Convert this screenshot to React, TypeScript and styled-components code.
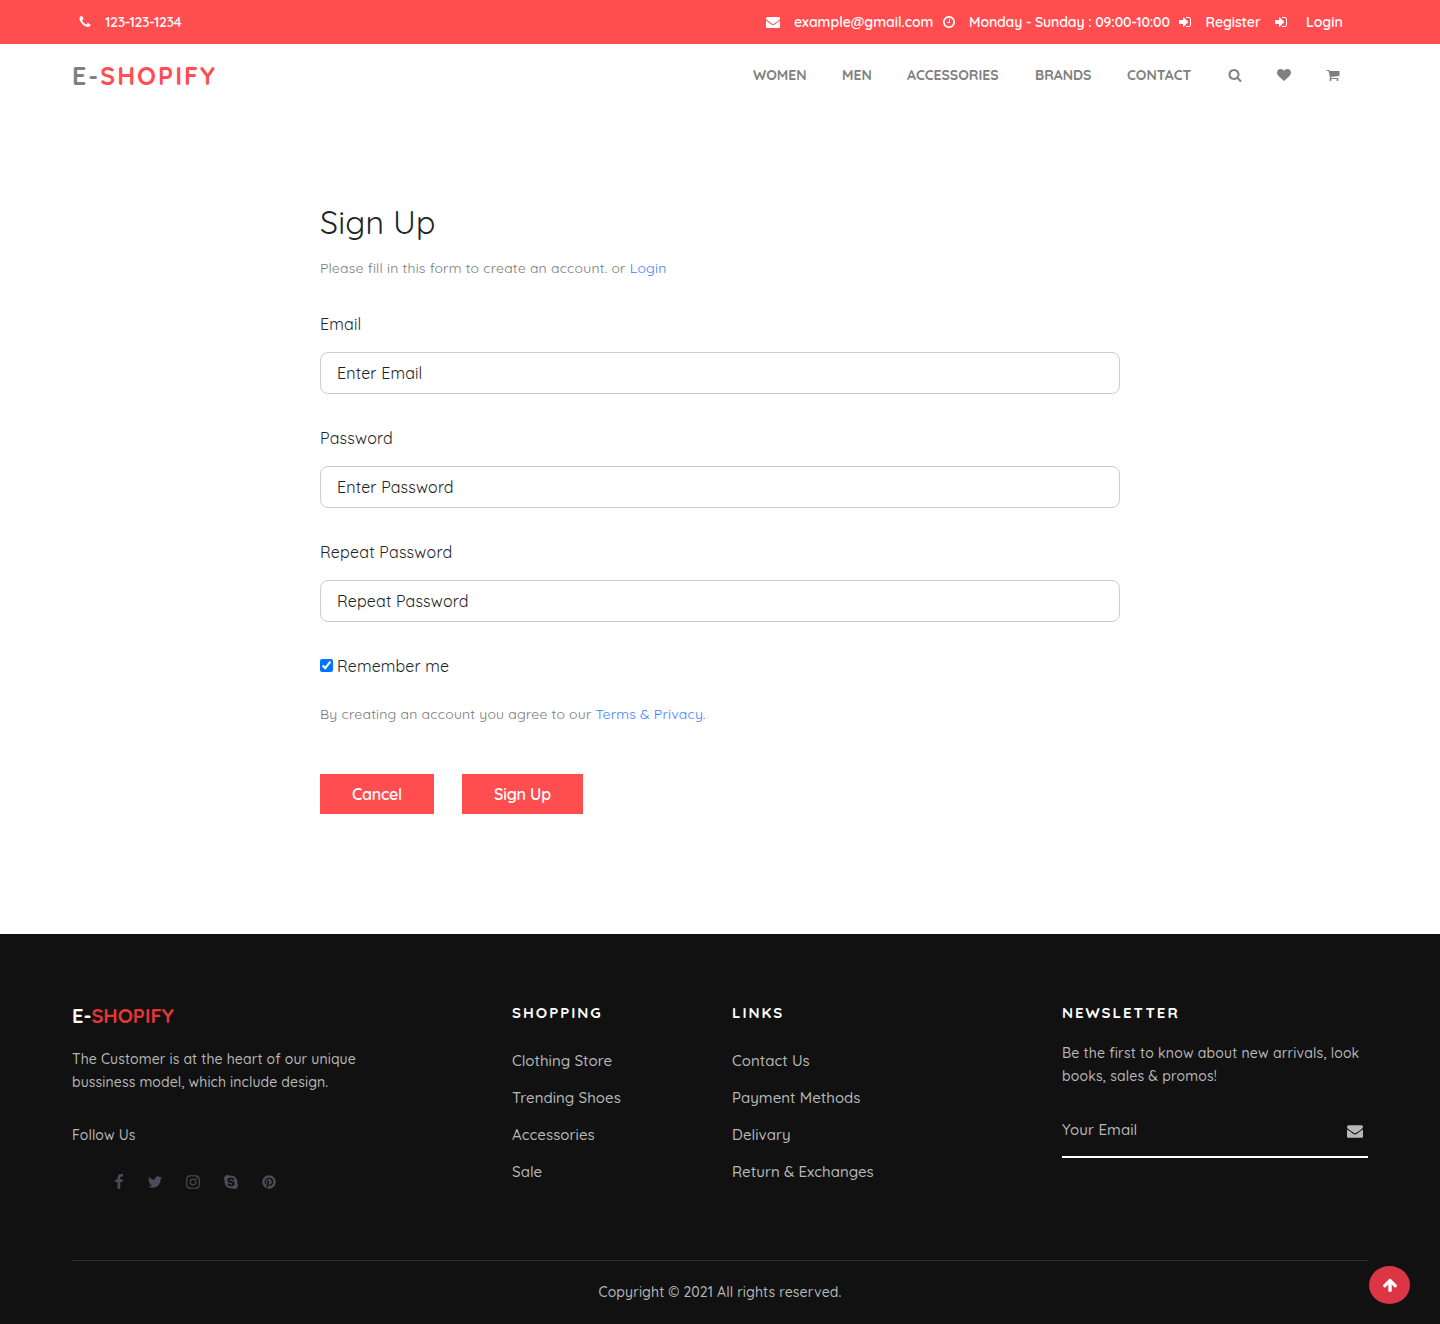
import React from "react";
import styled, { createGlobalStyle } from "styled-components";
import { FaPinterest, FaSkype } from "react-icons/fa";

const GlobalStyle = createGlobalStyle`
  *, *::before, *::after { box-sizing: border-box; }
  body {
    margin: 0;
    background: #fff;
    color: #212529;
    font-family: Quicksand, Lato, sans-serif;
    font-size: 16px;
    font-variant-ligatures: none;
  }
  h1, h2, h3, p, ul { margin: 0; padding: 0; font-weight: inherit; }
  a { color: inherit; text-decoration: none; }
  ul { list-style: none; }
`;

const paths = {
  phone:
    "M1600 1240q0 27-10 70.5t-21 68.5q-21 50-122 106-94 51-186 51-27 0-53-3.5t-57.5-12.5-47-14.5-55.5-20.5-49-18q-98-35-175-83-127-79-264-216t-216-264q-48-77-83-175-3-9-18-49t-20.5-55.5-14.5-47-12.5-57.5-3.5-53q0-92 51-186 56-101 106-122 25-11 68.5-21t70.5-10q14 0 21 3 18 6 53 76 11 19 30 54t35 63.5 31 53.5q3 4 17.5 25t21.5 35.5 7 28.5q0 20-28.5 50t-62 55-62 53-28.5 46q0 9 5 22.5t8.5 20.5 14 24 11.5 19q76 137 174 235t235 174q2 1 19 11.5t24 14 20.5 8.5 22.5 5q18 0 46-28.5t53-62 55-62 50-28.5q14 0 28.5 7t35.5 21.5 25 17.5q25 15 53.5 31t63.5 35 54 30q70 35 76 53 3 7 3 21z",
  envelope:
    "M1792 710v794q0 66-47 113t-113 47h-1472q-66 0-113-47t-47-113v-794q44 49 101 87 362 246 497 345 57 42 92.5 65.5t94.5 48 110 24.5h2q51 0 110-24.5t94.5-48 92.5-65.5q170-123 498-345 57-39 100-87zm0-294q0 79-49 151t-122 123q-376 261-468 325-10 7-42.5 30.5t-54 38-52 32.5-57.5 27-50 9h-2q-23 0-50-9t-57.5-27-52-32.5-54-38-42.5-30.5q-91-64-262-182.5t-205-142.5q-62-42-117-115.5t-55-136.5q0-78 41.5-130t118.5-52h1472q65 0 112.5 47t47.5 113z",
  clock:
    "M1024 544v448q0 14-9 23t-23 9h-320q-14 0-23-9t-9-23v-64q0-14 9-23t23-9h224v-352q0-14 9-23t23-9h64q14 0 23 9t9 23zm416 352q0-148-73-273t-198-198-273-73-273 73-198 198-73 273 73 273 198 198 273 73 273-73 198-198 73-273zm224 0q0 209-103 385.5t-279.5 279.5-385.5 103-385.5-103-279.5-279.5-103-385.5 103-385.5 279.5-279.5 385.5-103 385.5 103 279.5 279.5 103 385.5z",
  signIn:
    "M1312 896q0 26-19 45l-544 544q-19 19-45 19t-45-19-19-45v-288h-448q-26 0-45-19t-19-45v-384q0-26 19-45t45-19h448v-288q0-26 19-45t45-19 45 19l544 544q19 19 19 45zm352-352v704q0 119-84.5 203.5t-203.5 84.5h-320q-13 0-22.5-9.5t-9.5-22.5q0-4-1-20t-.5-26.5 3-23.5 10-19.5 20.5-6.5h320q66 0 113-47t47-113v-704q0-66-47-113t-113-47h-312l-11.5-1-11.5-3-8-5.5-7-9-2-13.5q0-4-1-20t-.5-26.5 3-23.5 10-19.5 20.5-6.5h320q119 0 203.5 84.5t84.5 203.5z",
  search:
    "M1216 832q0-185-131.5-316.5t-316.5-131.5-316.5 131.5-131.5 316.5 131.5 316.5 316.5 131.5 316.5-131.5 131.5-316.5zm512 832q0 52-38 90t-90 38q-54 0-90-38l-343-342q-179 124-399 124-143 0-273.5-55.5t-225-150-150-225-55.5-273.5 55.5-273.5 150-225 225-150 273.5-55.5 273.5 55.5 225 150 150 225 55.5 273.5q0 220-124 399l343 343q37 37 37 90z",
  heart:
    "M896 1664q-26 0-44-18l-624-602q-10-8-27.5-26t-55.5-65.5-68-97.5-53.5-121-23.5-138q0-220 127-344t351-124q62 0 126.5 21.5t120 58 95.5 68.5 76 68q36-36 76-68t95.5-68.5 120-58 126.5-21.5q224 0 351 124t127 344q0 221-229 450l-623 600q-18 18-44 18z",
  cart:
    "M704 1536q0 52-38 90t-90 38-90-38-38-90 38-90 90-38 90 38 38 90zm896 0q0 52-38 90t-90 38-90-38-38-90 38-90 90-38 90 38 38 90zm128-1088v512q0 24-16.5 42.5t-40.5 21.5l-1044 122q13 60 13 70 0 16-24 64h920q26 0 45 19t19 45-19 45-45 19h-1024q-26 0-45-19t-19-45q0-11 8-31.5t16-36 21.5-40 15.5-29.5l-177-823h-204q-26 0-45-19t-19-45 19-45 45-19h256q16 0 28.5 6.5t19.5 15.5 13 24.5 8 26 5.5 29.5 4.5 26h1201q26 0 45 19t19 45z",
  facebook:
    "M1343 12v264h-157q-86 0-116 36t-30 108v189h293l-39 296h-254v759h-306v-759h-255v-296h255v-218q0-186 104-288.5t277-102.5q147 0 228 12z",
  twitter:
    "M1684 408q-67 98-162 167 1 14 1 42 0 130-38 259.5t-115.5 248.5-184.5 210.5-258 146-323 54.5q-271 0-496-145 35 4 78 4 225 0 401-138-105-2-188-64.5t-114-159.5q33 5 61 5 43 0 85-11-112-23-185.5-111.5t-73.5-205.5v-4q68 38 146 41-66-44-105-115t-39-154q0-88 44-163 121 149 294.5 238.5t371.5 99.5q-8-38-8-74 0-134 94.5-228.5t228.5-94.5q140 0 236 102 109-21 205-78-37 115-142 178 93-10 186-50z",
  instagram:
    "M1152 896q0-106-75-181t-181-75-181 75-75 181 75 181 181 75 181-75 75-181zm138 0q0 164-115 279t-279 115-279-115-115-279 115-279 279-115 279 115 115 279zm108-410q0 38-27 65t-65 27-65-27-27-65 27-65 65-27 65 27 27 65zm-502-220q-7 0-76.5-.5t-105.5 0-96.5 3-103 10-71.5 18.5q-50 20-88 58t-58 88q-11 29-18.5 71.5t-10 103-3 96.5 0 105.5.5 76.5-.5 76.5 0 105.5 3 96.5 10 103 18.5 71.5q20 50 58 88t88 58q29 11 71.5 18.5t103 10 96.5 3 105.5 0 76.5-.5 76.5.5 105.5 0 96.5-3 103-10 71.5-18.5q50-20 88-58t58-88q11-29 18.5-71.5t10-103 3-96.5 0-105.5-.5-76.5.5-76.5 0-105.5-3-96.5-10-103-18.5-71.5q-20-50-58-88t-88-58q-29-11-71.5-18.5t-103-10-96.5-3-105.5 0-76.5.5zm768 630q0 229-5 317-10 208-124 322t-322 124q-88 5-317 5t-317-5q-208-10-322-124t-124-322q-5-88-5-317t5-317q10-208 124-322t322-124q88-5 317-5t317 5q208 10 322 124t124 322q5 88 5 317z",
  arrowUp:
    "M1675 971q0 51-37 90l-75 75q-38 38-91 38-54 0-90-38l-294-293v704q0 52-37.5 84.5t-90.5 32.5h-128q-53 0-90.5-32.5t-37.5-84.5v-704l-294 293q-36 38-90 38t-90-38l-75-75q-38-38-38-90 0-53 38-91l651-651q35-37 90-37 54 0 91 37l651 651q37 39 37 91z",
};

function Icon({ name, size = 14 }: { name: keyof typeof paths; size?: number }) {
  return (
    <Glyph width={size} height={size} viewBox="0 0 1792 1792" aria-hidden="true">
      <path d={paths[name]} />
    </Glyph>
  );
}

const Glyph = styled.svg`
  display: block;
  flex: none;
  fill: currentColor;
`;

/* Header */
const TopBar = styled.div`
  display: flex;
  justify-content: space-between;
  height: 44px;
  padding: 0 96px 0 78px;
  background: #ff4d50;
  color: #fff;
  font-size: 14px;
  font-weight: 600;
  line-height: 44px;
`;

const TopGroup = styled.div`
  display: flex;
`;

const TopItem = styled.a<{ $width?: number; $gap: number; $tracking?: number }>`
  display: flex;
  align-items: center;
  gap: ${(p) => p.$gap}px;
  width: ${(p) => (p.$width ? `${p.$width}px` : "auto")};
  letter-spacing: ${(p) => p.$tracking ?? 0}px;
  white-space: nowrap;
`;

const NavBar = styled.header`
  display: flex;
  justify-content: space-between;
  align-items: center;
  height: 61px;
  padding: 0 100px 0 72px;
  color: #808080;
`;

const Logo = styled.a`
  padding-top: 2px;
  font-size: 25px;
  font-weight: 700;
  line-height: 32px;
  letter-spacing: 2px;
  em { font-style: normal; color: #ff4d50; }
`;

const Nav = styled.nav`
  display: flex;
  align-items: center;
  font-size: 14px;
  font-weight: 700;
  line-height: 20px;
`;

const NavItem = styled.a<{ $width: number }>`
  display: block;
  width: ${(p) => p.$width}px;
`;

/* Form */
const Main = styled.main`
  width: 800px;
  height: 829px;
  margin: 0 auto;
  padding-top: 98px;
`;

const Title = styled.h1`
  font-size: 32px;
  line-height: 38px;
  letter-spacing: 0.2px;
`;

const Note = styled.p`
  color: #787878;
  font-size: 14px;
  line-height: 22px;
  letter-spacing: 0.21px;
  a { color: #3b7dff; }
`;

const Intro = styled(Note)`
  margin: 16px 0 33px;
`;

const Field = styled.label`
  display: block;
  height: 114px;
  line-height: 24px;
  letter-spacing: 0.2px;
`;

const Input = styled.input`
  display: block;
  width: 100%;
  height: 42px;
  margin-top: 16px;
  padding: 0 16px;
  border: 1px solid #ccc;
  border-radius: 8px;
  background: #fff;
  font: inherit;
  letter-spacing: 0.15px;
  &::placeholder { color: #212121; opacity: 1; }
`;

const Remember = styled.label`
  display: flex;
  align-items: center;
  gap: 4px;
  height: 24px;
  margin-bottom: 25px;
  letter-spacing: 0.12px;
  input { width: 13px; height: 13px; margin: 0 0 2px; }
`;

const Actions = styled.div`
  display: flex;
  gap: 28px;
  margin-top: 49px;
`;

const Button = styled.button<{ $width: number }>`
  width: ${(p) => p.$width}px;
  height: 40px;
  padding: 0;
  border: 0;
  background: #ff4d50;
  color: #fff;
  font: 600 16px/40px Quicksand, Lato, sans-serif;
  letter-spacing: -0.2px;
`;

/* Footer */
const Footer = styled.footer`
  height: 390px;
  padding: 0 72px;
  background: #111;
  color: #b7b7b7;
  font-size: 14px;
  font-weight: 500;
`;

const Columns = styled.div`
  display: grid;
  grid-template-columns: 440px 220px 330px 306px;
  height: 326px;
  padding-top: 68px;
`;

const FooterLogo = styled.a`
  display: block;
  color: #fff;
  font-size: 20px;
  font-weight: 700;
  line-height: 28px;
  em { font-style: normal; color: #e53637; }
`;

const Copy = styled.p<{ $top: number; $tracking?: number }>`
  margin-top: ${(p) => p.$top}px;
  line-height: 23px;
  letter-spacing: ${(p) => p.$tracking ?? 0.11}px;
`;

const Socials = styled.div`
  display: flex;
  align-items: center;
  height: 24px;
  margin: 23px 0 0 29.5px;
  color: #4b4c58;
`;

const Social = styled.a<{ $width?: number }>`
  display: flex;
  justify-content: center;
  width: ${(p) => p.$width ?? 38}px;
`;

const Heading = styled.h2`
  color: #fff;
  font-size: 15px;
  font-weight: 700;
  line-height: 21px;
  letter-spacing: 2px;
`;

const Links = styled.ul`
  margin-top: 19px;
  font-size: 15px;
  line-height: 37px;
  letter-spacing: 0.04px;
`;

const Subscribe = styled.div`
  display: flex;
  justify-content: space-between;
  height: 55px;
  margin-top: 15px;
  padding: 0 5px 0 0;
  border-bottom: 2px solid #fff;
  font-size: 15px;
  line-height: 53px;
  letter-spacing: 0.1px;
  svg { margin-top: 20px; }
`;

const Bottom = styled.div`
  height: 64px;
  border-top: 1px solid #2b2b2b;
  text-align: center;
  line-height: 63px;
  letter-spacing: 0.1px;
`;

const ToTop = styled.button`
  position: fixed;
  right: 30px;
  bottom: 20px;
  display: flex;
  align-items: center;
  justify-content: center;
  width: 41px;
  height: 38px;
  padding: 0;
  border: 0;
  border-radius: 50%;
  background: #dc3545;
  color: #fff;
`;

const contacts = [
  { icon: "envelope", text: "example@gmail.com", width: 176, gap: 14, tracking: 0 },
  { icon: "clock", text: "Monday - Sunday : 09:00-10:00", width: 236, gap: 13, tracking: -0.13 },
  { icon: "signIn", text: "Register", width: 96, gap: 13.5, tracking: -0.05 },
  { icon: "signIn", text: "Login", width: 70, gap: 18, tracking: 0 },
] as const;

const menu = [
  { text: "WOMEN", width: 89 },
  { text: "MEN", width: 65 },
  { text: "ACCESSORIES", width: 128 },
  { text: "BRANDS", width: 92 },
  { text: "CONTACT", width: 100.5 },
];

const fields = [
  { label: "Email", type: "email", hint: "Enter Email" },
  { label: "Password", type: "password", hint: "Enter Password" },
  { label: "Repeat Password", type: "password", hint: "Repeat Password" },
];

const shopping = ["Clothing Store", "Trending Shoes", "Accessories", "Sale"];
const links = ["Contact Us", "Payment Methods", "Delivary", "Return & Exchanges"];

function LinkList({ items }: { items: string[] }) {
  return (
    <Links>
      {items.map((text) => (
        <li key={text}>
          <a href="#">{text}</a>
        </li>
      ))}
    </Links>
  );
}

export default function App() {
  return (
    <>
      <GlobalStyle />
      <TopBar>
        <TopItem $gap={13} $tracking={-0.3}>
          <Icon name="phone" />
          123-123-1234
        </TopItem>
        <TopGroup>
          {contacts.map((c) => (
            <TopItem key={c.text} $width={c.width} $gap={c.gap} $tracking={c.tracking}>
              <Icon name={c.icon} />
              {c.text}
            </TopItem>
          ))}
        </TopGroup>
      </TopBar>
      <NavBar>
        <Logo href="#">E-<em>SHOPIFY</em></Logo>
        <Nav>
          {menu.map((m) => (
            <NavItem key={m.text} href="#" $width={m.width}>{m.text}</NavItem>
          ))}
          <NavItem href="#" $width={49.5}><Icon name="search" /></NavItem>
          <NavItem href="#" $width={49}><Icon name="heart" /></NavItem>
          <NavItem href="#" $width={14}><Icon name="cart" /></NavItem>
        </Nav>
      </NavBar>

      <Main>
        <Title>Sign Up</Title>
        <Intro>
          Please fill in this form to create an account. or <a href="#">Login</a>
        </Intro>
        {fields.map((f) => (
          <Field key={f.label}>
            {f.label}
            <Input type={f.type} placeholder={f.hint} />
          </Field>
        ))}
        <Remember>
          <input type="checkbox" defaultChecked />
          Remember me
        </Remember>
        <Note>
          By creating an account you agree to our <a href="#">Terms & Privacy</a>.
        </Note>
        <Actions>
          <Button type="button" $width={114}>Cancel</Button>
          <Button type="button" $width={121}>Sign Up</Button>
        </Actions>
      </Main>

      <Footer>
        <Columns>
          <div>
            <FooterLogo href="#">E-<em>SHOPIFY</em></FooterLogo>
            <Copy $top={18}>
              The Customer is at the heart of our unique
              <br />
              bussiness model, which include design.
            </Copy>
            <Copy $top={30}>Follow Us</Copy>
            <Socials>
              <Social href="#" $width={34}><Icon name="facebook" size={16} /></Social>
              <Social href="#"><Icon name="twitter" size={16} /></Social>
              <Social href="#"><Icon name="instagram" size={16} /></Social>
              <Social href="#"><FaSkype size={16} /></Social>
              <Social href="#"><FaPinterest size={14} /></Social>
            </Socials>
          </div>
          <div>
            <Heading>SHOPPING</Heading>
            <LinkList items={shopping} />
          </div>
          <div>
            <Heading>LINKS</Heading>
            <LinkList items={links} />
          </div>
          <div>
            <Heading>NEWSLETTER</Heading>
            <Copy $top={19} $tracking={0.18}>
              Be the first to know about new arrivals, look
              <br />
              books, sales & promos!
            </Copy>
            <Subscribe>
              Your Email
              <Icon name="envelope" size={16} />
            </Subscribe>
          </div>
        </Columns>
        <Bottom>Copyright © 2021 All rights reserved.</Bottom>
      </Footer>
      <ToTop type="button" aria-label="Back to top"><Icon name="arrowUp" size={16} /></ToTop>
    </>
  );
}
